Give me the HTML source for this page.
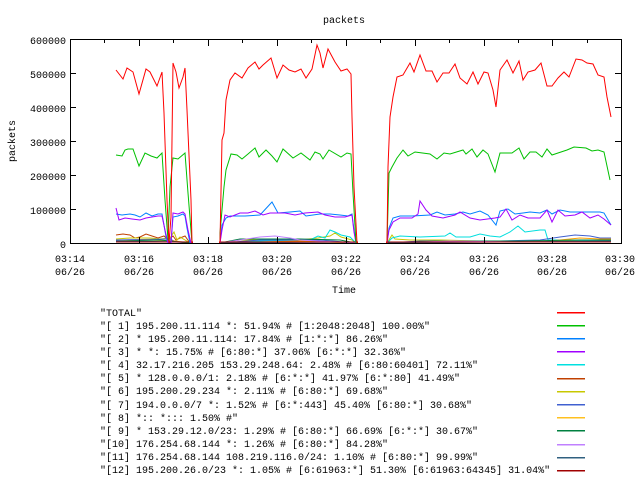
<!DOCTYPE html>
<html><head><meta charset="utf-8"><style>
html,body{margin:0;padding:0;background:#fff;}
svg{display:block;font-family:"Liberation Mono",monospace;font-size:10px;}
</style></head><body>
<svg width="640" height="480" viewBox="0 0 640 480" xmlns="http://www.w3.org/2000/svg">
<rect width="640" height="480" fill="#fff"/>
<text x="344" y="23" text-anchor="middle" fill="#000" font-size="10">packets</text>
<text x="344" y="293" text-anchor="middle" fill="#000" font-size="10">Time</text>
<text transform="translate(15,141) rotate(-90)" text-anchor="middle" fill="#000" font-size="10">packets</text>
<g fill="#000" text-anchor="end" font-size="10">
<text x="66" y="44">600000</text><text x="66" y="78">500000</text><text x="66" y="112">400000</text>
<text x="66" y="146">300000</text><text x="66" y="180">200000</text><text x="66" y="214">100000</text><text x="66" y="248">0</text>
</g>
<g fill="#000" text-anchor="middle" font-size="10">
<text x="70" y="262">03:14</text><text x="70" y="275">06/26</text>
<text x="139" y="262">03:16</text><text x="139" y="275">06/26</text>
<text x="208" y="262">03:18</text><text x="208" y="275">06/26</text>
<text x="277" y="262">03:20</text><text x="277" y="275">06/26</text>
<text x="346" y="262">03:22</text><text x="346" y="275">06/26</text>
<text x="415" y="262">03:24</text><text x="415" y="275">06/26</text>
<text x="484" y="262">03:26</text><text x="484" y="275">06/26</text>
<text x="552" y="262">03:28</text><text x="552" y="275">06/26</text>
<text x="620" y="262">03:30</text><text x="620" y="275">06/26</text>
</g>
<g fill="none" stroke-width="1">
<polyline stroke="#c04000" points="116,235 123,234 130,235 135,238 140,237 146,234 152,236 158,238 164,236 168,240 173,236 176,240 180,238 185,236 190,243"/>
<polyline stroke="#c8c800" points="116,239 130,238 150,238 160,239 170,238 174,232 177,240 180,237 190,243 220,243 240,240 300,240 318,238 330,236 335,233 341,237 352,240 356,243 387,243 392,235 395,239 410,240 440,240 480,241 520,241 560,241 600,240 610,241"/>
<polyline stroke="#00dede" points="220,243 260,241 310,240 318,236 325,238 330,230 335,232 341,235 350,237 356,243 387,243 392,238 400,236 420,237 445,236 450,233 456,237 470,237 480,234 490,236 500,237 510,232 518,226 525,232 540,230 545,230 548,240 560,240 610,241"/>
<polyline stroke="#4060d0" points="116,240 170,239 176,242 190,243 220,243 260,240 320,240 356,243 387,243 420,241 500,241 540,240 560,237 575,235 590,236 600,238 611,238"/>
<polyline stroke="#ffa000" points="116,241 150,240 175,241 190,243 220,243 300,241 356,243 387,243 430,242 550,241 580,238 600,239 611,239"/>
<polyline stroke="#008040" points="116,241 160,240 190,243 220,243 240,239 300,239 340,240 356,243 387,243 440,241 520,241 580,240 611,240"/>
<polyline stroke="#c080ff" points="220,243 240,240 260,237 275,236 290,238 300,240 356,243 387,243 450,241 520,242 611,242"/>
<polyline stroke="#306080" points="116,241 190,242 220,243 356,242 387,243 500,242 611,241"/>
<polyline stroke="#a00000" points="116,242 190,242 220,242 356,242 387,242 560,242 611,242"/>
<polyline stroke="#0080ff" points="116,214 122,215 130,214 135,215 140,217 146,213 152,216 158,214 162,214 164,225 166,237 168,243 171,243 173,217 178,216 183,214 185,216 187,228 190,243 192,243 220,243 222,225 226,218 230,216 245,216 260,215 272,202 278,213 290,212 300,211 306,216 320,214 330,214 340,215 348,216 352,214 354,230 356,243 387,243 389,228 393,218 400,216 412,216 430,215 437,212 445,215 455,214 463,212 470,214 480,211 488,215 496,225 500,211 508,209 515,214 523,213 530,212 540,213 547,210 552,214 560,210 570,212 580,212 590,212 600,212 604,213 611,225"/>
<polyline stroke="#a000ff" points="116,208 119,220 125,218 132,219 140,220 146,218 152,217 158,216 162,216 165,230 168,243 171,243 173,213 178,214 183,212 185,214 188,230 191,243 220,243 222,230 225,215 230,217 240,213 248,213 255,211 263,215 270,213 277,213 285,213 295,215 305,213 318,212 325,215 335,217 345,217 352,215 354,232 356,243 387,243 389,230 393,222 400,218 412,218 418,214 420,201 426,210 432,216 443,218 455,215 460,212 470,218 480,220 495,218 500,217 506,209 512,220 520,215 528,218 540,218 547,210 552,222 558,210 565,216 575,215 582,212 590,218 598,215 604,219 611,225"/>
<polyline stroke="#00c000" points="116,155 122,156 125,150 128,149 133,149 139,166 145,153 151,156 157,158 162,153 165,200 168,240 170,187 173,158 178,159 185,153 188,193 192,243 220,243 220,233 224,187 226,170 231,154 237,155 242,159 248,154 255,148 259,157 266,150 272,156 277,162 283,149 293,158 301,153 310,160 315,152 320,154 323,159 329,150 341,157 347,153 351,154 353,193 356,243 387,243 389,173 392,167 397,158 403,150 408,156 415,152 430,154 437,159 444,153 450,154 463,150 466,154 472,149 477,157 483,150 488,154 495,172 500,153 512,153 519,148 524,159 530,152 536,152 542,157 547,149 552,155 558,153 567,150 574,147 586,148 592,151 598,150 604,152 610,180"/>
<polyline stroke="#ff0000" points="116,70 123,79 127,68 133,72 139,94 146,69 150,72 157,86 162,72 164,113 167,200 169,243 171,217 173,63 176,72 179,88 183,77 185,68 187,110 191,200 192,243 220,243 222,140 224,133 226,100 230,80 235,73 242,78 248,68 255,62 259,69 263,65 271,58 277,78 283,65 289,70 295,72 301,69 306,78 312,69 317,45 320,53 323,68 328,49 335,62 341,71 347,69 351,74 352,117 354,187 357,243 387,243 388,167 390,117 393,97 397,77 403,75 410,63 414,72 420,55 426,71 432,71 437,82 443,73 449,73 455,64 460,78 467,84 473,72 478,84 484,72 488,73 493,90 496,107 500,70 507,60 513,73 519,61 523,80 528,72 535,70 541,63 547,86 552,86 558,78 564,72 569,77 576,59 582,60 587,63 593,64 598,75 604,77 607,97 611,117"/>
</g>
<g fill="#fff">
<rect x="193" y="236" width="26" height="8"/>
<rect x="358" y="236" width="28" height="8"/>
</g>
<g fill="#000">
<rect x="70" y="39" width="552" height="1"/>
<rect x="70" y="243" width="552" height="1"/>
<rect x="70" y="39" width="1" height="205"/>
<rect x="621" y="39" width="1" height="205"/>
<rect x="70" y="73" width="6" height="1"/><rect x="615" y="73" width="6" height="1"/>
<rect x="70" y="107" width="6" height="1"/><rect x="615" y="107" width="6" height="1"/>
<rect x="70" y="141" width="6" height="1"/><rect x="615" y="141" width="6" height="1"/>
<rect x="70" y="175" width="6" height="1"/><rect x="615" y="175" width="6" height="1"/>
<rect x="70" y="209" width="6" height="1"/><rect x="615" y="209" width="6" height="1"/>
<rect x="139" y="237" width="1" height="6"/><rect x="139" y="40" width="1" height="6"/>
<rect x="208" y="237" width="1" height="6"/><rect x="208" y="40" width="1" height="6"/>
<rect x="277" y="237" width="1" height="6"/><rect x="277" y="40" width="1" height="6"/>
<rect x="346" y="237" width="1" height="6"/><rect x="346" y="40" width="1" height="6"/>
<rect x="415" y="237" width="1" height="6"/><rect x="415" y="40" width="1" height="6"/>
<rect x="484" y="237" width="1" height="6"/><rect x="484" y="40" width="1" height="6"/>
<rect x="552" y="237" width="1" height="6"/><rect x="552" y="40" width="1" height="6"/>
<rect x="104" y="40" width="1" height="3"/><rect x="173" y="40" width="1" height="3"/>
<rect x="242" y="40" width="1" height="3"/><rect x="311" y="40" width="1" height="3"/>
<rect x="380" y="40" width="1" height="3"/><rect x="449" y="40" width="1" height="3"/>
<rect x="518" y="40" width="1" height="3"/><rect x="587" y="40" width="1" height="3"/>
</g>
<g fill="#000" font-size="10">
<text x="100" y="316">"TOTAL"</text>
<text x="100" y="329">"[ 1] 195.200.11.114 *: 51.94% # [1:2048:2048] 100.00%"</text>
<text x="100" y="342">"[ 2] * 195.200.11.114: 17.84% # [1:*:*] 86.26%"</text>
<text x="100" y="355">"[ 3] * *: 15.75% # [6:80:*] 37.06% [6:*:*] 32.36%"</text>
<text x="100" y="368">"[ 4] 32.17.216.205 153.29.248.64: 2.48% # [6:80:60401] 72.11%"</text>
<text x="100" y="381">"[ 5] * 128.0.0.0/1: 2.18% # [6:*:*] 41.97% [6:*:80] 41.49%"</text>
<text x="100" y="394">"[ 6] 195.200.29.234 *: 2.11% # [6:80:*] 69.68%"</text>
<text x="100" y="408">"[ 7] 194.0.0.0/7 *: 1.52% # [6:*:443] 45.40% [6:80:*] 30.68%"</text>
<text x="100" y="421">"[ 8] *:: *::: 1.50% #"</text>
<text x="100" y="434">"[ 9] * 153.29.12.0/23: 1.29% # [6:80:*] 66.69% [6:*:*] 30.67%"</text>
<text x="100" y="447">"[10] 176.254.68.144 *: 1.26% # [6:80:*] 84.28%"</text>
<text x="100" y="460">"[11] 176.254.68.144 108.219.116.0/24: 1.10% # [6:80:*] 99.99%"</text>
<text x="100" y="473">"[12] 195.200.26.0/23 *: 1.05% # [6:61963:*] 51.30% [6:61963:64345] 31.04%"</text>
</g>
<g>
<rect x="557" y="312" width="28" height="1.5" fill="#ff0000"/>
<rect x="557" y="325" width="28" height="1.5" fill="#00c000"/>
<rect x="557" y="338" width="28" height="1.5" fill="#0080ff"/>
<rect x="557" y="351" width="28" height="1.5" fill="#a000ff"/>
<rect x="557" y="364" width="28" height="1.5" fill="#00e0e0"/>
<rect x="557" y="378" width="28" height="1.5" fill="#c04000"/>
<rect x="557" y="391" width="28" height="1.5" fill="#c8c800"/>
<rect x="557" y="404" width="28" height="1.5" fill="#4060d0"/>
<rect x="557" y="417" width="28" height="1.5" fill="#ffc020"/>
<rect x="557" y="430" width="28" height="1.5" fill="#008040"/>
<rect x="557" y="444" width="28" height="1.5" fill="#c080ff"/>
<rect x="557" y="457" width="28" height="1.5" fill="#306080"/>
<rect x="557" y="470" width="28" height="1.5" fill="#a00000"/>
</g>
</svg>
</body></html>
